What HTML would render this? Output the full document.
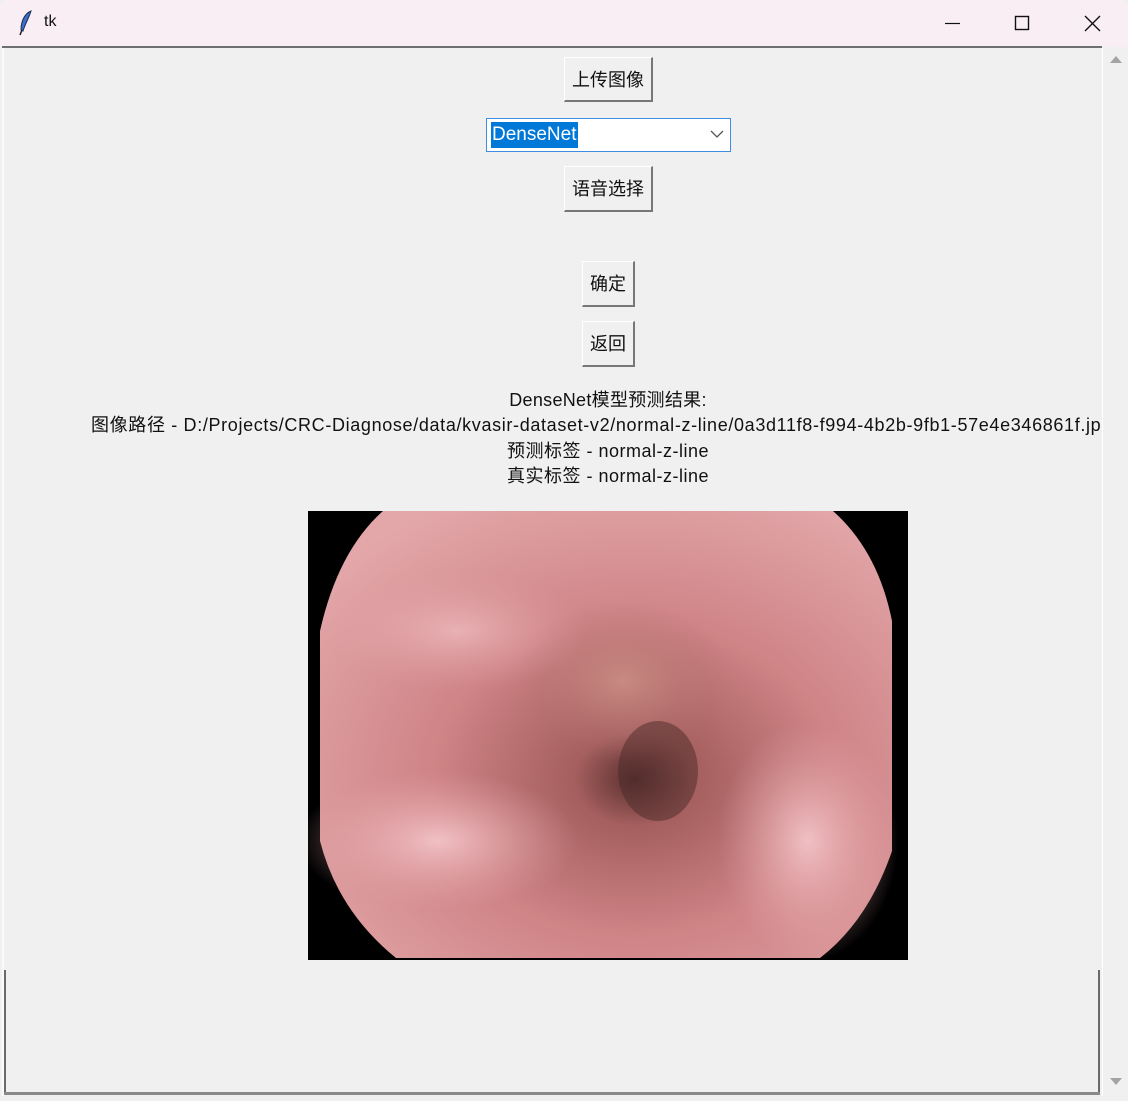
<!DOCTYPE html>
<html><head><meta charset="utf-8"><style>
body{margin:0;width:1128px;height:1098px;overflow:hidden;background:#f0f0f0;font-family:"Liberation Sans","Noto Sans CJK SC",sans-serif;position:relative}
.title{position:absolute;left:0;top:0;width:1128px;height:47px;background:#f9eef4;border-radius:8px 8px 0 0}
.title .t{position:absolute;left:44px;top:13px;font-size:16px;color:#111}
.sep{position:absolute;left:2px;top:46px;width:1100px;height:2px;background:#6f6f6f}
.btn{position:absolute;background:#f0f0f0;border:1px solid #fff;border-right:2px solid #777;border-bottom:2px solid #777;box-sizing:border-box;font-size:18px;text-align:center;color:#111;font-family:"Noto Sans CJK SC",sans-serif}
.combo{position:absolute;left:486px;top:118px;width:245px;height:34px;background:#fff;border:1px solid #3d8ee0;box-sizing:border-box}
.sel{position:absolute;left:4px;top:3px;height:26px;background:#0078d7;color:#fff;font-size:19px;line-height:26px;padding:0 1px}
.txt{position:absolute;font-size:18px;color:#111;white-space:nowrap;font-family:"Liberation Sans","Noto Sans CJK SC",sans-serif}
.sb{position:absolute;left:1102px;top:48px;width:26px;height:1048px;background:#f0f0f0;border-left:1px solid #fff}
</style></head><body>
<div class="title">
<svg style="position:absolute;left:18px;top:10px" width="16" height="26" viewBox="0 0 16 26"><path d="M13 1 C6 4 3 12 3 20 L5 21 C7 14 11 8 13 1Z" fill="#3a6fc4" stroke="#1c2f55" stroke-width="1"/><path d="M4 20 L2 25" stroke="#222" stroke-width="1.5"/></svg>
<span class="t">tk</span>
<svg style="position:absolute;left:944px;top:14px" width="160" height="20"><path d="M1 9.5H16" stroke="#111" stroke-width="1.2"/><rect x="71.5" y="2.5" width="13" height="13" fill="none" stroke="#111" stroke-width="1.4"/><path d="M141 2L156 17M156 2L141 17" stroke="#111" stroke-width="1.4"/></svg>
</div>
<div class="sep"></div>
<div style="position:absolute;left:2px;top:48px;width:2px;height:1048px;background:#fafafa"></div>
<div style="position:absolute;left:4px;top:970px;width:2px;height:122px;background:#6a6a6a"></div>
<div style="position:absolute;left:1098px;top:970px;width:2px;height:122px;background:#6a6a6a"></div>
<div style="position:absolute;left:4px;top:1092px;width:1096px;height:3px;background:#8a8a8a"></div>
<div class="sb"><svg width="26" height="1048"><path d="M7 15L13 8L19 15Z" fill="#a3a3a3"/><path d="M7 1030L13 1037L19 1030Z" fill="#a3a3a3"/></svg></div>

<div class="btn" style="left:564px;top:57px;width:89px;height:45px;line-height:42px">上传图像</div>
<div class="combo"><div class="sel">DenseNet</div>
<svg style="position:absolute;right:6px;top:10px" width="14" height="10"><path d="M1 2L7 8L13 2" fill="none" stroke="#555" stroke-width="1.3"/></svg></div>
<div class="btn" style="left:564px;top:166px;width:89px;height:46px;line-height:43px">语音选择</div>
<div class="btn" style="left:582px;top:261px;width:53px;height:46px;line-height:43px">确定</div>
<div class="btn" style="left:582px;top:321px;width:53px;height:46px;line-height:43px">返回</div>

<div class="txt" style="left:0;width:1216px;text-align:center;top:386px;letter-spacing:0.3px">DenseNet模型预测结果:</div>
<div style="position:absolute;left:0;top:410px;width:1102px;height:26px;overflow:hidden"><div class="txt" style="left:91px;top:1px;letter-spacing:0.65px">图像路径 - D:/Projects/CRC-Diagnose/data/kvasir-dataset-v2/normal-z-line/0a3d11f8-f994-4b2b-9fb1-57e4e346861f.jpg</div></div>
<div class="txt" style="left:0;width:1216px;text-align:center;top:437px;letter-spacing:0.5px">预测标签 - normal-z-line</div>
<div class="txt" style="left:0;width:1216px;text-align:center;top:462px;letter-spacing:0.5px">真实标签 - normal-z-line</div>

<svg style="position:absolute;left:308px;top:511px" width="600" height="449">
<defs>
<radialGradient id="g1" cx="0.55" cy="0.6" r="0.7"><stop offset="0" stop-color="#5a3030"/><stop offset="0.15" stop-color="#a55f5e"/><stop offset="0.5" stop-color="#cf8486"/><stop offset="1" stop-color="#e3a7aa"/></radialGradient>
<radialGradient id="g2" cx="0.5" cy="0.5" r="0.5"><stop offset="0" stop-color="#c98a82"/><stop offset="1" stop-color="#b06e6c" stop-opacity="0"/></radialGradient>
<radialGradient id="g3" cx="0.5" cy="0.5" r="0.5"><stop offset="0" stop-color="#f0c0c4"/><stop offset="1" stop-color="#e2a0a6" stop-opacity="0"/></radialGradient>
</defs>
<rect width="600" height="449" fill="#000"/>
<path d="M75,0 L525,0 Q570,40 584,110 L584,340 Q560,410 512,447 L88,447 Q30,400 12,330 L12,120 Q30,40 75,0Z" fill="url(#g1)"/>
<ellipse cx="315" cy="170" rx="110" ry="80" fill="url(#g2)"/>
<ellipse cx="130" cy="330" rx="140" ry="70" fill="url(#g3)"/>
<ellipse cx="500" cy="330" rx="90" ry="120" fill="url(#g3)"/>
<ellipse cx="150" cy="120" rx="130" ry="60" fill="url(#g3)" opacity="0.7"/>
<ellipse cx="350" cy="260" rx="40" ry="50" fill="#4a2a28" opacity="0.5"/>
</svg>
</body></html>
